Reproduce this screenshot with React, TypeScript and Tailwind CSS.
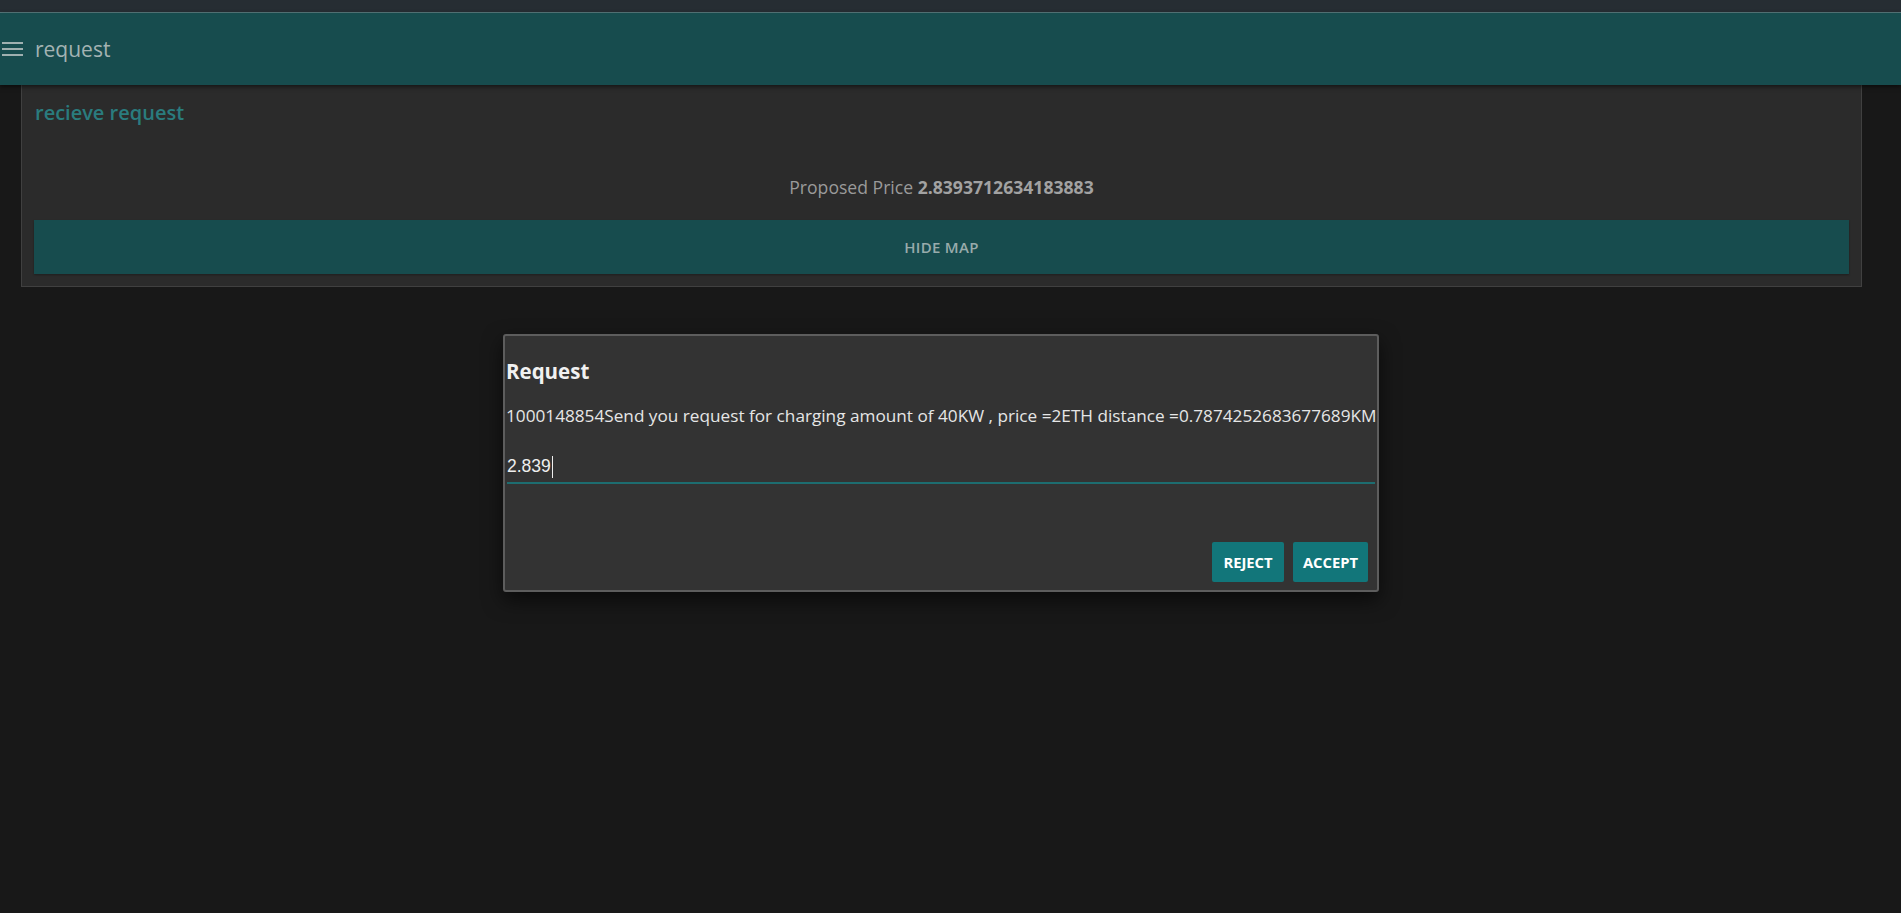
import React from "react";

export default function App() {
  return (
    <div
      className="relative w-full h-[913px] overflow-hidden bg-[#181818]"
      style={{ fontFamily: '"Open Sans", "Noto Sans", sans-serif' }}
    >
      <div className="h-[12px] bg-[#262d33]" />
      <div className="h-px bg-[#56767a]" />
      <header className="h-[72px] bg-[#174c4e] flex items-center shadow-[0_2px_4px_rgba(0,0,0,0.5)] relative z-10">
        <div className="ml-[2px] w-[21px] flex flex-col gap-[4px]">
          <span className="block h-[2px] bg-[#9fb0b0]" />
          <span className="block h-[2px] bg-[#9fb0b0]" />
          <span className="block h-[2px] bg-[#9fb0b0]" />
        </div>
        <span className="ml-[12px] text-[21px] leading-none text-[#a3b3b3] pt-[1px]">request</span>
      </header>
      <section className="ml-[21px] w-[1841px] bg-[#2b2b2b] border border-t-0 border-[#404040] px-[12px] pb-[12px]">
        <h2 className="pt-[14px] pl-[1px] text-[20px] leading-[28px] font-semibold text-[#2a7c7e]">recieve request</h2>
        <p className="mt-[48px] text-center text-[17.6px] leading-[24px] text-[#9a9a9a]">
          Proposed Price <b className="font-bold text-[#a2a2a2]">2.8393712634183883</b>
        </p>
        <button className="mt-[21px] w-full h-[54px] bg-[#174c4e] text-[#98abab] text-[15px] font-semibold tracking-[0.3px] shadow-[0_1px_2px_rgba(0,0,0,0.3)]">
          HIDE MAP
        </button>
      </section>

      <div className="absolute left-[503px] top-[334px] w-[876px] h-[258px] bg-[#333333] border-2 border-[#5d5d5d] rounded-[3px] shadow-[0_8px_20px_rgba(0,0,0,0.6)] flex flex-col">
        <h3 className="mt-[20px] pl-[1px] text-[20.5px] leading-[30px] font-bold text-[#f1f1f1]">Request</h3>
        <p className="mt-[17px] pl-[1px] text-[17.2px] leading-[26px] text-[#e6e6e6] whitespace-nowrap">
          1000148854Send you request for charging amount of 40KW , price =2ETH distance =0.7874252683677689KM
        </p>
        <div className="mt-[23px] ml-[2px] mr-[2px] h-[32px] border-b-2 border-[#1d6d70] flex items-center">
          <span
            className="text-[17.5px] leading-none text-[#eeeeee]"
            style={{ fontFamily: '"Liberation Sans", Arial, sans-serif' }}
          >
            2.839
          </span>
          <span className="inline-block w-[1.5px] h-[22px] bg-[#eeeeee] ml-[1px]" />
        </div>
        <div className="mt-auto mb-[8px] mr-[9px] flex justify-end gap-[9px]">
          <button className="h-[40px] w-[72px] rounded-[2px] bg-[#12767a] text-white text-[14.8px] font-bold">REJECT</button>
          <button className="h-[40px] w-[75px] rounded-[2px] bg-[#12767a] text-white text-[14.8px] font-bold">ACCEPT</button>
        </div>
      </div>
    </div>
  );
}
